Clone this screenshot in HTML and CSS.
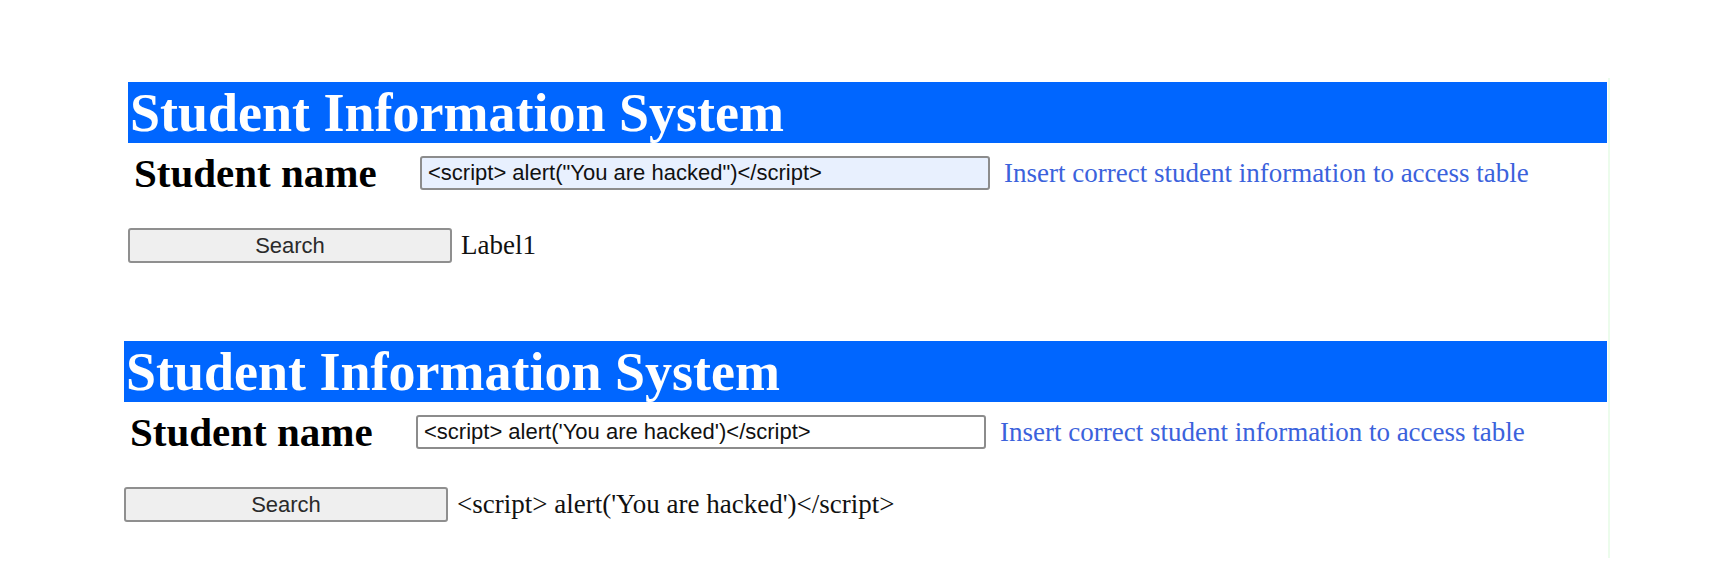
FILE: index.html
```html
<!DOCTYPE html>
<html lang="en">
<head>
  <meta charset="UTF-8" />
  <title>Student Information System</title>
  <link rel="stylesheet" href="styles.css">
</head>
<body>
<div class="page">

  <!-- Before the search: autofilled input, empty label -->
  <div class="panel" id="before">
    <h1 class="title">Student Information System</h1>
    <div class="name-row">
      <span class="name-label">Student name</span>
      <input type="text" class="name-input filled" value="<script> alert(&quot;You are hacked&quot;)</script>">
      <span class="hint">Insert correct student information to access table</span>
    </div>
    <div class="search-row">
      <button class="search-btn">Search</button>
      <span class="result">Label1</span>
    </div>
  </div>

  <!-- After the search: label echoes the input -->
  <div class="panel shifted" id="after">
    <h1 class="title">Student Information System</h1>
    <div class="name-row">
      <span class="name-label">Student name</span>
      <input type="text" class="name-input" value="<script> alert('You are hacked')</script>">
      <span class="hint">Insert correct student information to access table</span>
    </div>
    <div class="search-row">
      <button class="search-btn">Search</button>
      <span class="result">&lt;script&gt; alert('You are hacked')&lt;/script&gt;</span>
    </div>
  </div>

</div>
</body>
</html>
```

FILE: styles.css
```css
* {
  box-sizing: border-box;
}
body {
  margin: 0;
  background: #fff;
  font-family: "Liberation Serif", "Times New Roman", serif;
  color: #111;
}
.page {
  width: 1610px;
  height: 480px;
  margin-top: 78px;
  padding-top: 4px;
  border-right: 2px solid #ecfcec;
}
.panel {
  margin-left: 128px;
  width: 1479px;
}
.panel.shifted {
  margin-top: 78px;
  margin-left: 124px;
  width: 1483px;
}
.title {
  margin: 0;
  height: 61px;
  line-height: 63px;
  padding-left: 2px;
  background: #0066ff;
  color: #fff;
  font-size: 54px;
  font-weight: 900;
  white-space: nowrap;
  overflow: hidden;
}
.name-row {
  display: flex;
  align-items: center;
  height: 42px;
  margin-top: 9px;
  padding-left: 6px;
}
.name-label {
  width: 286px;
  flex-shrink: 0;
  font-size: 41px;
  font-weight: bold;
  color: #000;
}
.name-input {
  width: 570px;
  height: 34px;
  padding: 0 6px;
  border: 2px solid #8c8c8c;
  border-radius: 3px;
  background: #fff;
  font-family: "Liberation Sans", Arial, sans-serif;
  font-size: 22px;
  color: #111;
}
.name-input.filled {
  background: #e8f0fe;
}
.hint {
  margin-left: 14px;
  font-size: 27px;
  color: #3b62dc;
  white-space: nowrap;
}
.search-row {
  display: flex;
  align-items: center;
  margin-top: 34px;
}
.search-btn {
  width: 324px;
  height: 35px;
  padding: 0;
  border: 2px solid #8f8f8f;
  border-radius: 3px;
  background: #efefef;
  font-family: "Liberation Sans", Arial, sans-serif;
  font-size: 22px;
  color: #2a2a2a;
}
.result {
  margin-left: 9px;
  font-size: 27px;
  color: #111;
  white-space: nowrap;
}
```
